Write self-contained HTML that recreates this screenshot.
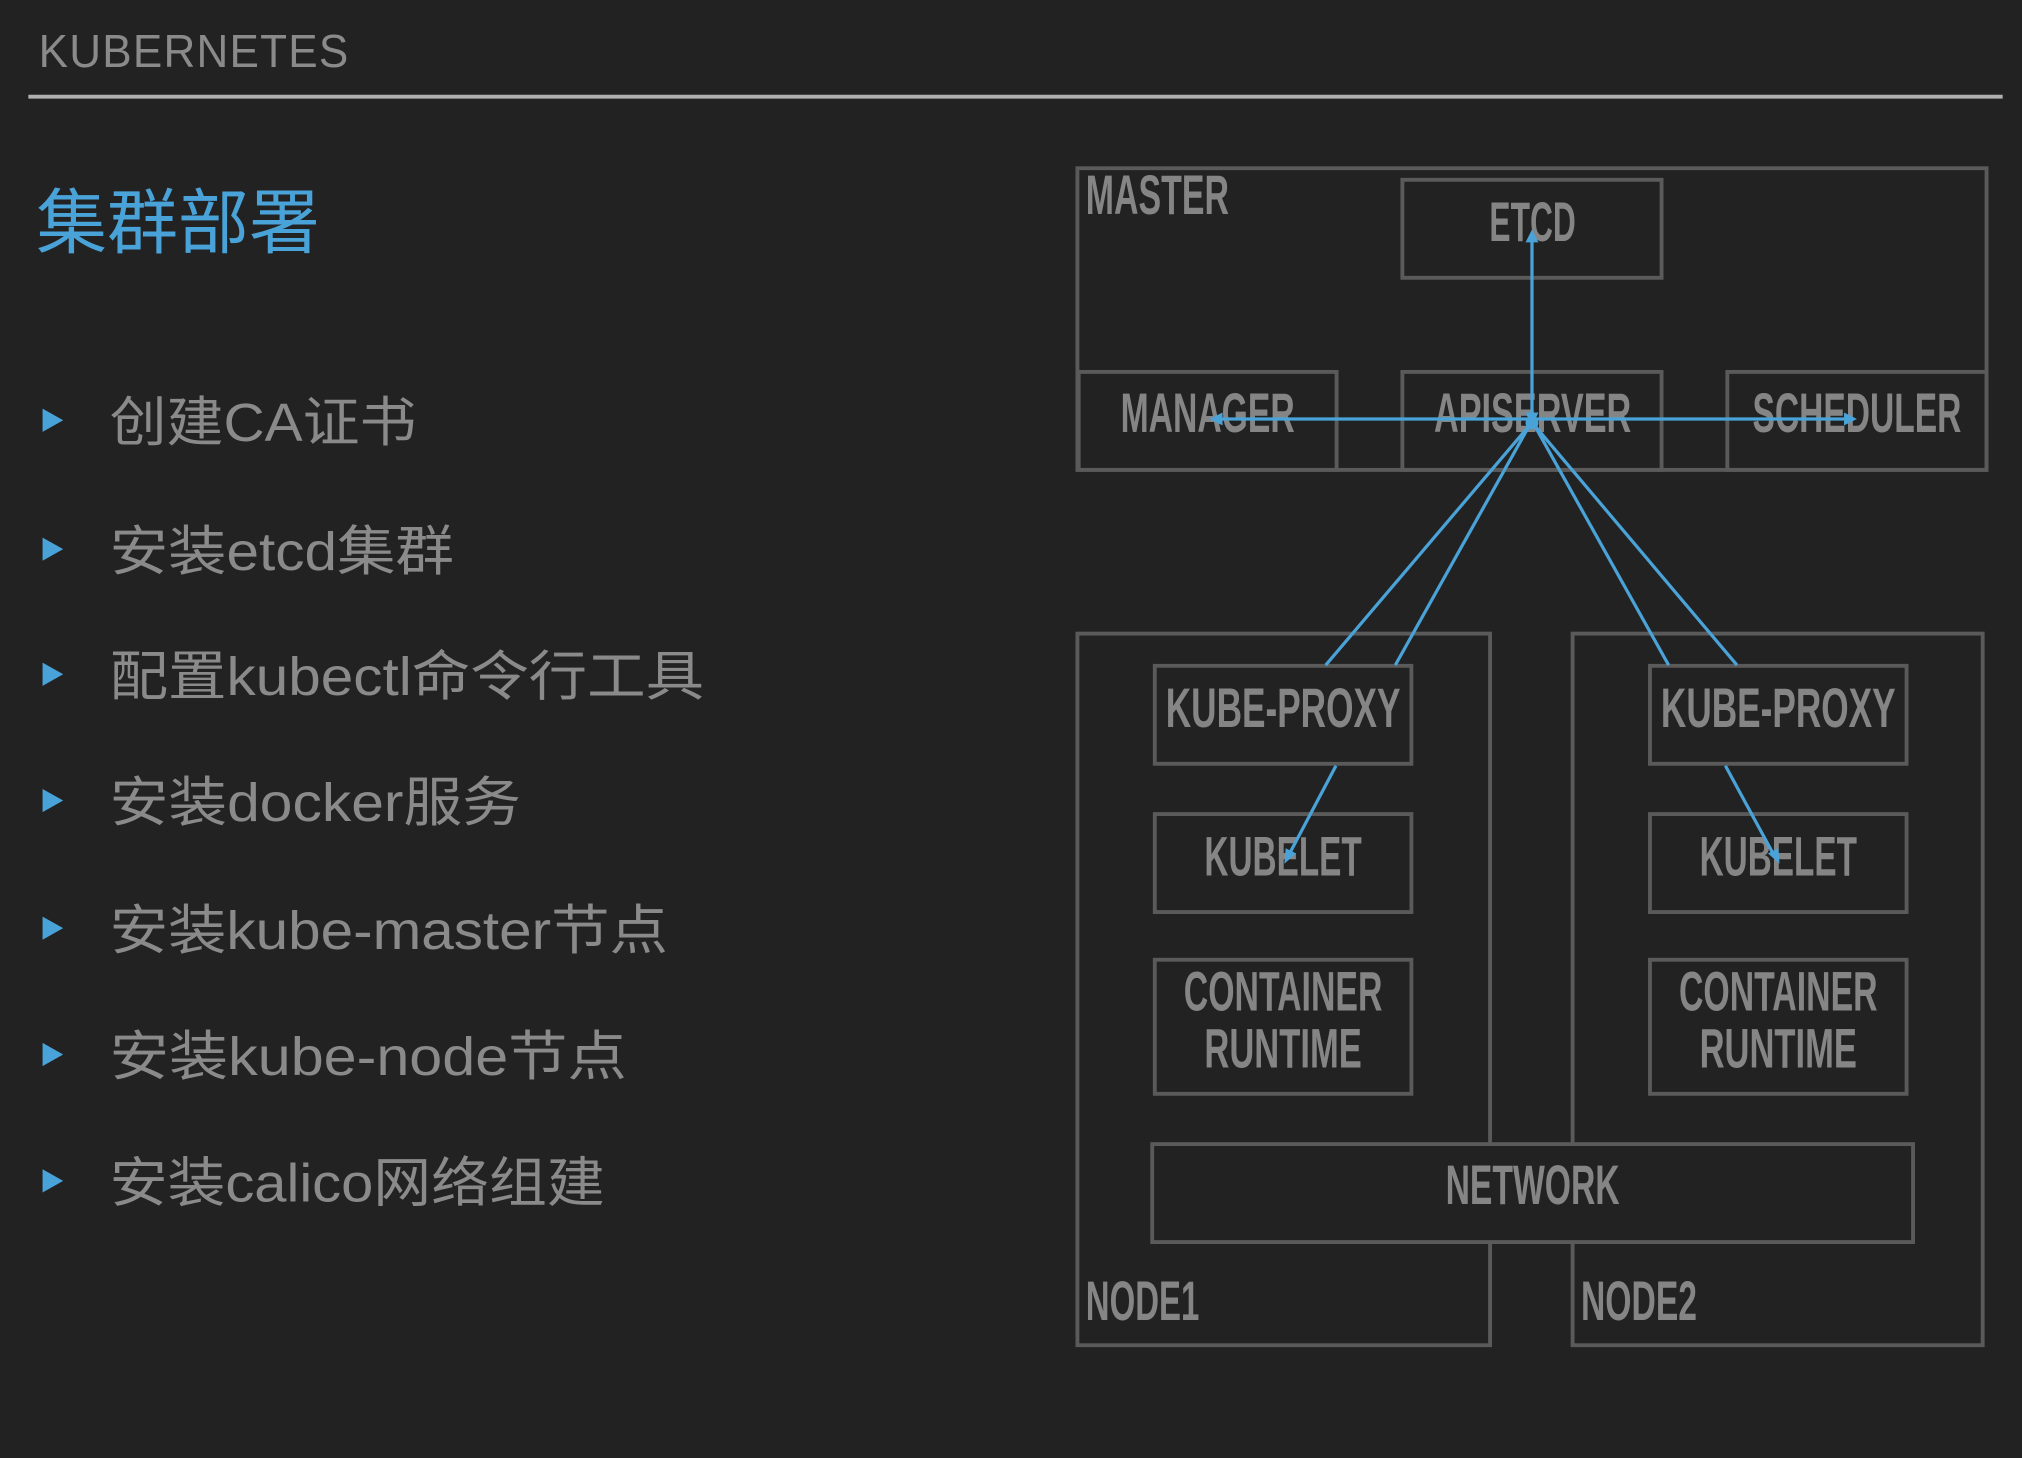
<!DOCTYPE html>
<html><head><meta charset="utf-8">
<style>
html,body{margin:0;padding:0;background:#222222;}
svg{display:block;}
.c{font-family:"Liberation Sans","Noto Sans CJK SC",sans-serif;}
.d{font-family:"Liberation Sans",sans-serif;font-weight:bold;fill:#858585;font-size:43px;}
</style></head>
<body>
<svg width="2022" height="1458" viewBox="0 0 1568 1131" preserveAspectRatio="none" xmlns="http://www.w3.org/2000/svg">
<rect width="1568" height="1131" fill="#222222"/>
<text x="30" y="52" class="c" font-size="36" fill="#8a8a8a" letter-spacing="1" textLength="241" lengthAdjust="spacingAndGlyphs">KUBERNETES</text>
<rect x="22" y="73.5" width="1531" height="3" fill="#b0b0b0"/>
<text x="28" y="192" class="c" font-size="55" fill="#4aa3d8">集群部署</text>

<g fill="#4aa3d8">
<polygon points="33,317 49,326 33,335"/>
<polygon points="33,417 49,426 33,435"/>
<polygon points="33,514 49,523 33,532"/>
<polygon points="33,612 49,621 33,630"/>
<polygon points="33,711 49,720 33,729"/>
<polygon points="33,809 49,818 33,827"/>
<polygon points="33,907 49,916 33,925"/>
</g>
<g class="c" font-size="42" fill="#8a8a8a">
<text x="85" y="342" textLength="238" lengthAdjust="spacingAndGlyphs">创建CA证书</text>
<text x="85" y="442" textLength="267" lengthAdjust="spacingAndGlyphs">安装etcd集群</text>
<text x="85" y="539" textLength="461" lengthAdjust="spacingAndGlyphs">配置kubectl命令行工具</text>
<text x="85" y="637" textLength="319" lengthAdjust="spacingAndGlyphs">安装docker服务</text>
<text x="85" y="736" textLength="433" lengthAdjust="spacingAndGlyphs">安装kube-master节点</text>
<text x="85" y="834" textLength="401" lengthAdjust="spacingAndGlyphs">安装kube-node节点</text>
<text x="85" y="932" textLength="384" lengthAdjust="spacingAndGlyphs">安装calico网络组建</text>
</g>

<g fill="none" stroke="#5a5a5a" stroke-width="3">
<rect x="835.5" y="130.5" width="705" height="234"/>
<rect x="1087.5" y="139.5" width="201" height="76"/>
<rect x="836.5" y="288.5" width="200" height="76"/>
<rect x="1087.5" y="288.5" width="201" height="76"/>
<rect x="1339.5" y="288.5" width="201" height="76"/>
<rect x="835.5" y="491.5" width="320" height="552"/>
<rect x="1219.5" y="491.5" width="318" height="552"/>
<rect x="895.5" y="516.5" width="199" height="76"/>
<rect x="1279.5" y="516.5" width="199" height="76"/>
<rect x="895.5" y="631.5" width="199" height="76"/>
<rect x="1279.5" y="631.5" width="199" height="76"/>
<rect x="895.5" y="744.5" width="199" height="104"/>
<rect x="1279.5" y="744.5" width="199" height="104"/>
<rect x="893.5" y="887.5" width="590" height="76" fill="#222222"/>
</g>

<g>
<text class="d" x="842" y="166" textLength="111" lengthAdjust="spacingAndGlyphs">MASTER</text>
<text class="d" x="1155" y="187" textLength="67" lengthAdjust="spacingAndGlyphs">ETCD</text>
<text class="d" x="869" y="335" textLength="135" lengthAdjust="spacingAndGlyphs">MANAGER</text>
<text class="d" x="1112" y="335" textLength="153" lengthAdjust="spacingAndGlyphs">APISERVER</text>
<text class="d" x="1359" y="335" textLength="162" lengthAdjust="spacingAndGlyphs">SCHEDULER</text>
<text class="d" x="904" y="564" textLength="182" lengthAdjust="spacingAndGlyphs">KUBE-PROXY</text>
<text class="d" x="1288" y="564" textLength="182" lengthAdjust="spacingAndGlyphs">KUBE-PROXY</text>
<text class="d" x="934" y="679" textLength="122" lengthAdjust="spacingAndGlyphs">KUBELET</text>
<text class="d" x="1318" y="679" textLength="122" lengthAdjust="spacingAndGlyphs">KUBELET</text>
<text class="d" x="918" y="784" textLength="154" lengthAdjust="spacingAndGlyphs">CONTAINER</text>
<text class="d" x="934" y="828" textLength="122" lengthAdjust="spacingAndGlyphs">RUNTIME</text>
<text class="d" x="1302" y="784" textLength="154" lengthAdjust="spacingAndGlyphs">CONTAINER</text>
<text class="d" x="1318" y="828" textLength="122" lengthAdjust="spacingAndGlyphs">RUNTIME</text>
<text class="d" x="1121" y="934" textLength="135" lengthAdjust="spacingAndGlyphs">NETWORK</text>
<text class="d" x="842" y="1024" textLength="88" lengthAdjust="spacingAndGlyphs">NODE1</text>
<text class="d" x="1226" y="1024" textLength="90" lengthAdjust="spacingAndGlyphs">NODE2</text>
</g>

<g stroke="#4aa3d8" stroke-width="2.5" fill="none">
<line x1="1188" y1="325" x2="1188" y2="184"/>
<line x1="944" y1="325" x2="1434" y2="325"/>
<line x1="1186" y1="330" x2="1028" y2="516"/>
<line x1="1186" y1="330" x2="1082" y2="516"/>
<line x1="1190" y1="330" x2="1294" y2="516"/>
<line x1="1190" y1="330" x2="1347" y2="516"/>
<line x1="1036" y1="594" x2="999" y2="664"/>
<line x1="1338" y1="594" x2="1376" y2="664"/>
</g>
<g fill="#4aa3d8">
<polygon points="1188,178 1183,188 1193,188"/>
<polygon points="1188,331 1183,320 1193,320"/>
<polygon points="938,325 948,320 948,330"/>
<polygon points="1440,325 1430,320 1430,330"/>
<polygon points="996,670 997,658 1005,662"/>
<polygon points="1380,670 1371,662 1379,658"/>
<circle cx="1188" cy="328" r="5"/>
</g>
</svg>
</body></html>
